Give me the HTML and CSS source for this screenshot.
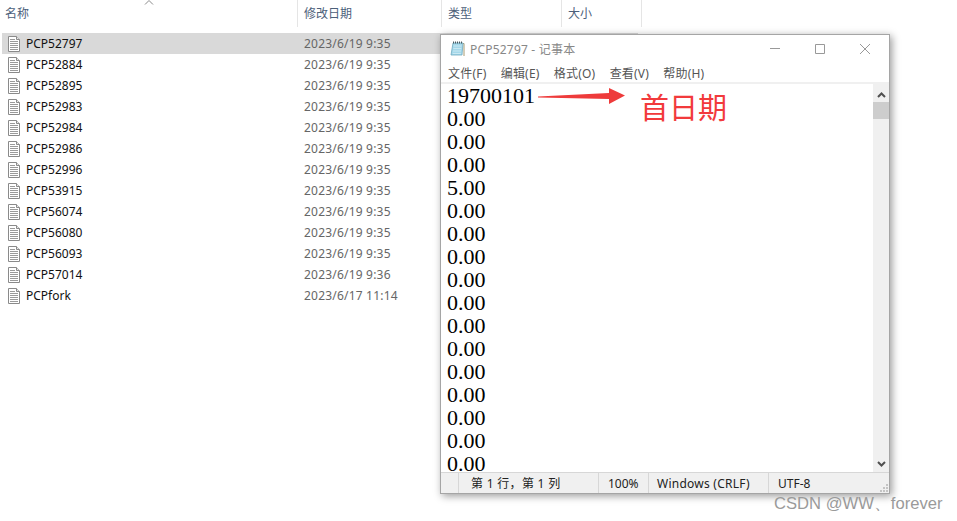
FILE: index.html
```html
<!DOCTYPE html>
<html lang="en">
<head>
  <meta charset="UTF-8" />
  <title>PCP52797 - 记事本</title>
  <link rel="stylesheet" href="styles.css">
</head>
<body>
  <svg class="svg-defs" width="0" height="0">
    <symbol id="file-icon" viewBox="0 0 12 16">
      <path d="M.5 .5h8l3 3v12h-11z" fill="#fff" stroke="#8a8a8a"/>
      <path d="M8.500 .5v3h3" fill="#e8e8e8" stroke="#8a8a8a"/>
      <path d="M2 3.500h5M2 5.500h8M2 7.500h8M2 9.500h8M2 11.500h8M2 13.500h8" stroke="#9a9a9a"/>
    </symbol>
  </svg>

  <div class="explorer">
    <div class="sort-arrow">
      <svg width="10" height="5" viewBox="0 0 10 5"><path d="M1 4.500l4-4 4 4" fill="none" stroke="#8a8a8a"/></svg>
    </div>
    <div class="file-header">
      <div class="col col-name">名称</div>
      <div class="col col-date">修改日期</div>
      <div class="col col-type">类型</div>
      <div class="col col-size">大小</div>
    </div>
    <div class="file-list" id="file-list"></div>
  </div>

  <div class="notepad">
    <div class="np-title">
      <svg class="np-icon" width="16" height="16" viewBox="0 0 16 16">
        <path d="M4.500 2.500h9.500v12.500" fill="none" stroke="#a89a70"/>
        <path d="M3 2h10l-1 12H1z" fill="#a5d8ea" stroke="#6fa9bf" stroke-width=".8"/>
        <path d="M3.500 5h8M3.300 7.500h8M3 10h8M2.800 12.500h8" stroke="#c9e8f2"/>
        <path d="M3 1.500h10" stroke="#4a5a60" stroke-width="2" stroke-dasharray="1 1"/>
      </svg>
      <span class="np-name">PCP52797 - 记事本</span>
      <div class="np-controls">
        <svg width="12" height="12" viewBox="0 0 12 12"><path d="M1 5.500h10" stroke="#999"/></svg>
        <svg width="12" height="12" viewBox="0 0 12 12"><path d="M1.500 1.500h9v9h-9z" fill="none" stroke="#999"/></svg>
        <svg width="12" height="12" viewBox="0 0 12 12"><path d="M1 1l10 10M11 1L1 11" stroke="#999"/></svg>
      </div>
    </div>
    <div class="np-menu">
      <span>文件(F)</span><span>编辑(E)</span><span>格式(O)</span><span>查看(V)</span><span>帮助(H)</span>
    </div>
    <div class="np-body">
      <div class="np-text">19700101
0.00
0.00
0.00
5.00
0.00
0.00
0.00
0.00
0.00
0.00
0.00
0.00
0.00
0.00
0.00
0.00</div>
      <div class="scrollbar">
        <svg width="9" height="6" viewBox="0 0 9 6"><path d="M1 5l3.500-3.500L8 5" fill="none" stroke="#505050" stroke-width="2"/></svg>
        <div class="thumb"></div>
        <div class="track"></div>
        <svg width="9" height="6" viewBox="0 0 9 6"><path d="M1 1l3.500 3.500L8 1" fill="none" stroke="#505050" stroke-width="2"/></svg>
      </div>
    </div>
    <div class="np-status">
      <div class="st st-blank"></div>
      <div class="st st-pos">第 1 行，第 1 列</div>
      <div class="st st-zoom">100%</div>
      <div class="st st-eol">Windows (CRLF)</div>
      <div class="st st-enc">UTF-8</div>
      <svg class="grip" width="9" height="9" viewBox="0 0 9 9">
        <path d="M7 1h2v2H7zM4 4h2v2H4zM7 4h2v2H7zM1 7h2v2H1zM4 7h2v2H4zM7 7h2v2H7z" fill="#c4c4c4"/>
      </svg>
    </div>
  </div>

  <svg class="red-arrow" width="90" height="20" viewBox="0 0 90 20">
    <path d="M0 10.500L71 7V2L87 9.500 71 18V13L0 11.500z" fill="#ee3b3b"/>
  </svg>
  <div class="first-date">首日期</div>
  <div class="watermark">CSDN @WW、forever</div>

  <script>
    const files = [
      ['PCP52797', '2023/6/19 9:35'],
      ['PCP52884', '2023/6/19 9:35'],
      ['PCP52895', '2023/6/19 9:35'],
      ['PCP52983', '2023/6/19 9:35'],
      ['PCP52984', '2023/6/19 9:35'],
      ['PCP52986', '2023/6/19 9:35'],
      ['PCP52996', '2023/6/19 9:35'],
      ['PCP53915', '2023/6/19 9:35'],
      ['PCP56074', '2023/6/19 9:35'],
      ['PCP56080', '2023/6/19 9:35'],
      ['PCP56093', '2023/6/19 9:35'],
      ['PCP57014', '2023/6/19 9:36'],
      ['PCPfork', '2023/6/17 11:14'],
    ];

    const list = document.getElementById('file-list');
    files.forEach((f, i) => {
      const row = document.createElement('div');
      row.className = i === 0 ? 'file-row selected' : 'file-row';
      row.innerHTML = `<svg class="file-icon" width="12" height="16"><use href="#file-icon"/></svg>` +
        `<span class="file-name">${f[0]}</span><span class="file-date">${f[1]}</span>`;
      list.appendChild(row);
    });
  </script>
</body>
</html>
```

FILE: styles.css
```css
html, body {
  margin: 0;
  height: 100%;
  background: #fff;
  overflow: hidden;
}

body {
  position: relative;
  font-family: "Noto Sans", "Noto Sans CJK SC", sans-serif;
  font-size: 12px;
}

.svg-defs {
  position: absolute;
}

.explorer {
  width: 957px;
}

.sort-arrow {
  position: absolute;
  left: 144px;
  top: 0;
  line-height: 0;
}

.file-header {
  display: flex;
  height: 27px;
  margin-bottom: 6px;
  color: #4c607a;
}

.col {
  box-sizing: border-box;
  padding-left: 6px;
  line-height: 27px;
  border-right: 1px solid #e5e5e5;
}

.col-name { width: 298px; padding-left: 5px; }
.col-date { width: 144px; }
.col-type { width: 120px; }
.col-size { width: 80px; }

.file-row {
  display: flex;
  align-items: center;
  height: 21px;
  margin-left: 2px;
  width: 636px;
}

.file-row.selected {
  background: #d9d9d9;
}

.file-icon {
  margin-left: 6px;
  flex: none;
}

.file-name {
  width: 278px;
  margin-left: 6px;
  color: #111;
}

.file-date {
  color: #666;
  letter-spacing: 0.2px;
}

.notepad {
  position: absolute;
  left: 440px;
  top: 34px;
  width: 448px;
  height: 458px;
  display: flex;
  flex-direction: column;
  background: #fff;
  border: 1px solid #a5a5a5;
  box-shadow: 2px 2px 8px rgba(0, 0, 0, 0.4);
}

.np-title {
  display: flex;
  align-items: center;
  height: 28px;
  flex: none;
}

.np-icon {
  margin-left: 9px;
}

.np-name {
  margin-left: 4px;
  color: #888;
  letter-spacing: 0.2px;
}

.np-controls {
  display: flex;
  gap: 33px;
  margin-left: auto;
  margin-right: 18px;
}

.np-menu {
  display: flex;
  gap: 14.25px;
  height: 18px;
  flex: none;
  padding: 1px 0 0 7px;
  line-height: 20px;
  letter-spacing: 0.2px;
  color: #555;
  border-bottom: 2px solid #f0f0f0;
}

.np-body {
  display: flex;
  flex: 1;
  min-height: 0;
}

.np-text {
  flex: 1;
  padding-left: 6px;
  overflow: hidden;
  white-space: pre;
  font-family: "Liberation Serif", serif;
  font-size: 22px;
  line-height: 23px;
  color: #000;
}

.scrollbar {
  display: flex;
  flex-direction: column;
  align-items: center;
  width: 16px;
  padding: 8px 0 5px;
  box-sizing: border-box;
  background: #f0f0f0;
}

.thumb {
  width: 100%;
  height: 17px;
  margin-top: 4px;
  background: #cdcdcd;
}

.track {
  flex: 1;
}

.np-status {
  display: flex;
  align-items: center;
  position: relative;
  height: 20px;
  flex: none;
  background: #f0f0f0;
  border-top: 1px solid #d7d7d7;
  color: #222;
}

.st {
  box-sizing: border-box;
  height: 100%;
  line-height: 21px;
  padding-left: 9px;
  border-right: 1px solid #d7d7d7;
}

.st-blank { width: 18px; padding: 0; }
.st-pos { width: 140px; padding-left: 12px; letter-spacing: 0.3px; }
.st-zoom { width: 50px; }
.st-eol { width: 120px; padding-left: 8px; letter-spacing: 0.25px; }
.st-enc { border-right: 0; }

.grip {
  position: absolute;
  right: 1px;
  bottom: 1px;
}

.red-arrow {
  position: absolute;
  left: 538px;
  top: 86px;
}

.first-date {
  position: absolute;
  left: 640px;
  top: 86px;
  font-size: 29px;
  line-height: 40px;
  font-family: "Noto Sans CJK SC", sans-serif;
  color: #f23a3c;
}

.watermark {
  position: absolute;
  left: 774px;
  top: 494px;
  font-family: "Liberation Sans", sans-serif;
  font-size: 16.6px;
  line-height: 20px;
  color: #9a9a9a;
}
```
